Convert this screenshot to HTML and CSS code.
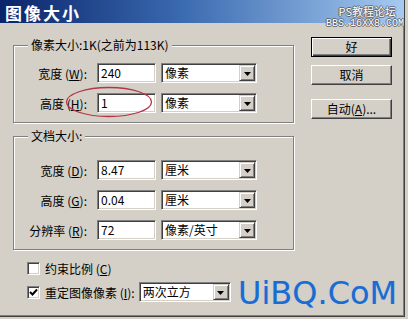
FILE: index.html
```html
<!DOCTYPE html>
<html>
<head>
<meta charset="utf-8">
<link rel="stylesheet" href="styles.css">
</head>
<body>
<div class="dialog">
  <div class="titlebar">图像大小</div>
  <div class="watermark">
    <div class="wm1">PS教程论坛</div>
    <div class="wm2">BBS.16XX8.COM</div>
  </div>
  <div class="content">
    <div class="main">
      <div class="group g1">
        <div class="legend"><span>像素大小:1K(之前为113K)</span></div>
        <div class="rows rows1">
          <div class="row">
            <span class="lbl">宽度 (<u>W</u>):</span>
            <div class="field">240</div>
            <div class="select sel1"><span class="val">像素</span><span class="arrow"><svg width="7" height="4" viewBox="0 0 7 4"><polygon points="0,0 7,0 3.5,4" fill="#000"/></svg></span></div>
          </div>
          <div class="row">
            <span class="lbl">高度 (<u>H</u>):</span>
            <div class="field">1</div>
            <div class="select sel1"><span class="val">像素</span><span class="arrow"><svg width="7" height="4" viewBox="0 0 7 4"><polygon points="0,0 7,0 3.5,4" fill="#000"/></svg></span></div>
          </div>
        </div>
      </div>
      <div class="group g2">
        <div class="legend"><span>文档大小:</span></div>
        <div class="rows rows2">
          <div class="row">
            <span class="lbl">宽度 (<u>D</u>):</span>
            <div class="field">8.47</div>
            <div class="select sel1"><span class="val">厘米</span><span class="arrow"><svg width="7" height="4" viewBox="0 0 7 4"><polygon points="0,0 7,0 3.5,4" fill="#000"/></svg></span></div>
          </div>
          <div class="row">
            <span class="lbl">高度 (<u>G</u>):</span>
            <div class="field">0.04</div>
            <div class="select sel1"><span class="val">厘米</span><span class="arrow"><svg width="7" height="4" viewBox="0 0 7 4"><polygon points="0,0 7,0 3.5,4" fill="#000"/></svg></span></div>
          </div>
          <div class="row">
            <span class="lbl">分辨率 (<u>R</u>):</span>
            <div class="field">72</div>
            <div class="select sel1"><span class="val">像素/英寸</span><span class="arrow"><svg width="7" height="4" viewBox="0 0 7 4"><polygon points="0,0 7,0 3.5,4" fill="#000"/></svg></span></div>
          </div>
        </div>
      </div>
      <div class="checks">
        <div class="crow">
          <span class="cb"></span>
          <span class="ctext">约束比例 (<u>C</u>)</span>
        </div>
        <div class="crow">
          <span class="cb"><svg width="9" height="9" viewBox="0 0 9 9"><polyline points="1,4 3.5,6.5 8,1.5" fill="none" stroke="#000" stroke-width="2"/></svg></span>
          <span class="ctext">重定图像像素 (<u>I</u>):</span>
          <div class="select sel2"><span class="val">两次立方</span><span class="arrow"><svg width="7" height="4" viewBox="0 0 7 4"><polygon points="0,0 7,0 3.5,4" fill="#000"/></svg></span></div>
        </div>
      </div>
    </div>
    <div class="side">
      <div class="btn default"><span class="btn-in">好</span></div>
      <div class="btn b2"><span>取消</span></div>
      <div class="btn b3"><span>自动(<u>A</u>)...</span></div>
    </div>
  </div>
  <svg class="ellipse" width="90" height="33" viewBox="0 0 90 33"><ellipse cx="44" cy="16" rx="42.5" ry="14.5" fill="none" stroke="#b53545" stroke-width="1.3"/></svg>
  <div class="brand">UiBQ.CoM</div>
</div>
</body>
</html>
```

FILE: styles.css
```css
* { box-sizing: border-box; }
body {
  margin: 0;
  background: #d4d0c8;
  font-family: "Noto Sans CJK SC", "Liberation Sans", sans-serif;
  font-size: 12px;
  color: #000;
}
u { text-decoration: underline; }
.dialog {
  position: relative;
  width: 405px;
  height: 317px;
  background: #d4d0c8;
  border-right: 1px solid #404040;
  border-bottom: 1px solid #404040;
  box-shadow: inset -1px -1px 0 #808080;
  overflow: hidden;
}
.titlebar {
  height: 23px;
  background: linear-gradient(to right, #0a246a 0%, #3a6ab0 45%, #a6caf0 100%);
  color: #fff;
  font-weight: bold;
  font-size: 17px;
  line-height: 21px;
  padding: 2px 0 0 5px;
  letter-spacing: 2px;
}
.watermark {
  position: absolute;
  left: 322px;
  top: 4px;
  width: 82px;
  text-align: right;
  color: #fff;
  text-shadow: 1px 0 0 #666, -1px 0 0 #666, 0 1px 0 #666, 0 -1px 0 #666;
}
.wm1 { font-size: 11px; line-height: 14px; padding-right: 8px; }
.wm2 { font-family: "Liberation Mono", monospace; font-size: 10px; line-height: 11px; }
.content { display: flex; }
.main { width: 281px; margin-left: 13px; }
.group {
  border: 1px solid #808080;
  box-shadow: 1px 1px 0 #fff, inset 1px 1px 0 #fff;
}
.g1 { margin-top: 22px; height: 78px; }
.g2 { margin-top: 13px; height: 114px; }
.legend {
  margin: -8px 0 0 14px;
  height: 14px;
  line-height: 14px;
}
.legend span { background: #d4d0c8; padding: 0 3px; }
.rows1 { margin-top: 6px; }
.rows2 { margin-top: 12px; }
.row {
  display: flex;
  align-items: center;
  height: 30px;
}
.lbl {
  width: 73px;
  margin-right: 10px;
  text-align: right;
  white-space: nowrap;
}
.field {
  width: 59px;
  height: 20px;
  background: #fff;
  border: 1px solid;
  border-color: #808080 #fff #fff #808080;
  box-shadow: inset 1px 1px 0 #404040, inset -1px -1px 0 #d4d0c8;
  padding-left: 3px;
  line-height: 18px;
}
.select {
  display: flex;
  align-items: center;
  height: 20px;
  background: #fff;
  border: 1px solid;
  border-color: #808080 #fff #fff #808080;
  box-shadow: inset 1px 1px 0 #404040, inset -1px -1px 0 #d4d0c8;
  padding: 1px;
}
.sel1 { width: 96px; margin-left: 5px; }
.sel2 { width: 92px; margin-left: 4px; }
.select .val { flex: 1; padding-left: 2px; line-height: 16px; white-space: nowrap; }
.arrow {
  width: 16px;
  height: 16px;
  display: flex;
  align-items: center;
  justify-content: center;
  background: #d4d0c8;
  border: 1px solid;
  border-color: #d4d0c8 #404040 #404040 #d4d0c8;
  box-shadow: inset 1px 1px 0 #fff, inset -1px -1px 0 #808080;
}
.arrow svg { display: block; margin-top: 1px; }
.checks { margin-top: 6px; }
.crow {
  display: flex;
  align-items: center;
  height: 24px;
}
.cb {
  width: 13px;
  height: 13px;
  margin-left: 14px;
  margin-right: 5px;
  background: #fff;
  border: 1px solid;
  border-color: #808080 #fff #fff #808080;
  box-shadow: inset 1px 1px 0 #404040, inset -1px -1px 0 #d4d0c8;
  display: flex;
  align-items: center;
  justify-content: center;
}
.cb svg { display: block; }
.ctext { white-space: nowrap; }
.side {
  width: 81px;
  margin-left: 17px;
  margin-top: 14px;
}
.btn {
  height: 20px;
  display: flex;
  align-items: center;
  justify-content: center;
  background: #d4d0c8;
  border: 1px solid;
  border-color: #fff #404040 #404040 #fff;
  box-shadow: inset -1px -1px 0 #808080;
  line-height: 16px;
}
.btn.default {
  border: 1px solid #000;
  box-shadow: inset 1px 1px 0 #fff, inset -1px -1px 0 #404040, inset -2px -2px 0 #808080;
}
.b2 { margin-top: 8px; }
.b3 { margin-top: 14px; }
.ellipse {
  position: absolute;
  left: 65px;
  top: 86px;
}
.brand {
  position: absolute;
  left: 238px;
  top: 275px;
  font-family: "DejaVu Sans", sans-serif;
  font-size: 32px;
  line-height: 36px;
  color: #1b6cd0;
  text-shadow: 0 0 1px #9fc4ee;
}
```
